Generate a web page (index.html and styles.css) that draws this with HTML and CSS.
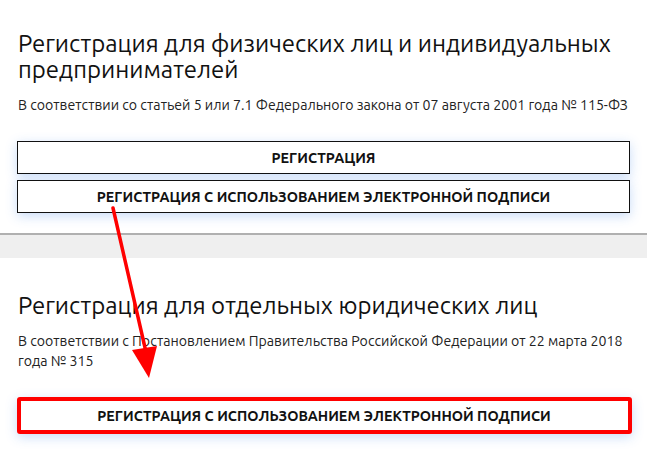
FILE: index.html
```html
<!DOCTYPE html>
<html lang="ru">
<head>
<meta charset="utf-8">
<title>Регистрация</title>
<link rel="stylesheet" href="styles.css">
</head>
<body>
<main class="page">
  <section class="block block-first">
    <h2 class="title">Регистрация для физических лиц и индивидуальных предпринимателей</h2>
    <p class="lead">В соответствии со статьей 5 или 7.1 Федерального закона от 07 августа 2001 года № 115-ФЗ</p>
    <div class="actions">
      <a class="btn" href="#">РЕГИСТРАЦИЯ</a>
      <a class="btn" href="#">РЕГИСТРАЦИЯ С ИСПОЛЬЗОВАНИЕМ ЭЛЕКТРОННОЙ ПОДПИСИ</a>
    </div>
  </section>
  <div class="divider"></div>
  <section class="block block-second">
    <h2 class="title">Регистрация для отдельных юридических лиц</h2>
    <p class="lead">В соответствии с Постановлением Правительства Российской Федерации от 22 марта 2018 года № 315</p>
    <div class="actions">
      <a class="btn btn-marked" href="#">РЕГИСТРАЦИЯ С ИСПОЛЬЗОВАНИЕМ ЭЛЕКТРОННОЙ ПОДПИСИ</a>
    </div>
  </section>
  <svg class="annotation" width="647" height="452" viewBox="0 0 647 452" aria-hidden="true">
    <line x1="113" y1="208" x2="146" y2="352" stroke="#ff0000" stroke-width="3.5" stroke-linecap="round"/>
    <polygon points="132,350 157,346 149,378" fill="#ff0000"/>
  </svg>
</main>
</body>
</html>
```

FILE: styles.css
```css
* { box-sizing: border-box; }

html, body {
  margin: 0;
  padding: 0;
  background: #ffffff;
}

body {
  font-family: "Ubuntu", "Open Sans", sans-serif;
  color: #111111;
}

.page {
  position: relative;
  width: 647px;
  height: 452px;
  overflow: hidden;
}

.block {
  padding: 0 17px;
}

.block-first {
  padding-top: 31px;
  padding-bottom: 20px;
}

.block-second {
  padding-top: 35px;
}

.title {
  margin: 0;
  font-size: 24px;
  font-weight: 400;
  line-height: 26px;
  padding-left: 1px;
  color: #111;
}

.lead {
  margin: 12px 0 0;
  font-size: 14.15px;
  line-height: 20px;
  padding-left: 1px;
  color: #222;
}

.actions {
  display: flex;
  flex-direction: column;
  gap: 6px;
  margin-top: 26px;
}

.btn {
  display: flex;
  align-items: center;
  justify-content: center;
  height: 33px;
  border: 1.5px solid #111;
  background: #fff;
  color: #111;
  text-decoration: none;
  font-weight: 700;
  font-size: 14.3px;
  box-shadow: 0 3px 12px rgba(60, 130, 230, 0.28);
}

.divider {
  height: 25px;
  background: #efefef;
  border-top: 2px solid #b0b0b0;
}

.btn-marked {
  height: 37px;
  margin-left: -0.5px;
  margin-right: -1.5px;
  border: 4.5px solid #ff0000;
  border-radius: 3px;
}

.annotation {
  position: absolute;
  left: 0;
  top: 0;
  pointer-events: none;
}
```
